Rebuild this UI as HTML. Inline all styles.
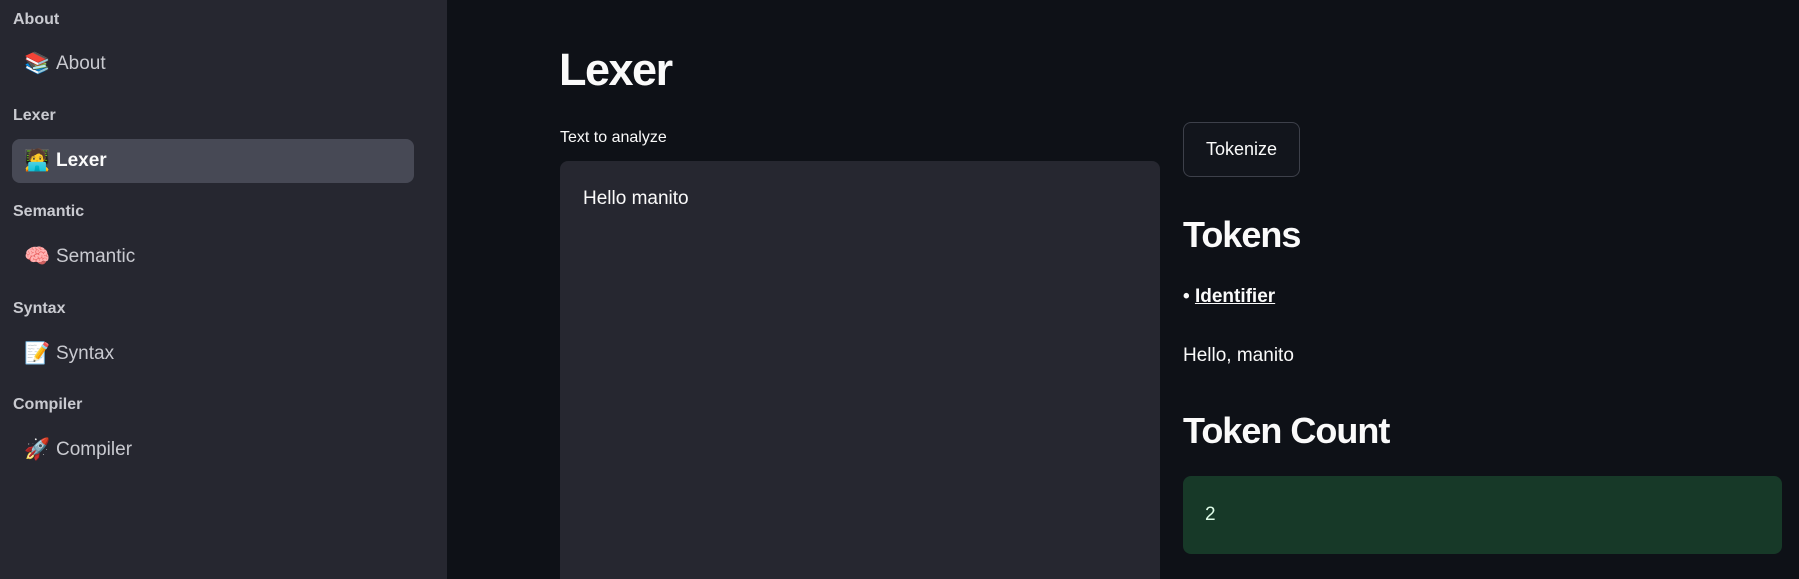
<!DOCTYPE html>
<html style="overflow:hidden;width:1799px;height:579px"><head><meta charset="utf-8"><style>
*{margin:0;padding:0;box-sizing:border-box}
body{width:1799px;height:579px;overflow:hidden;background:#0e1117;font-family:"Liberation Sans","Noto Sans CJK JP",sans-serif;color:#fafafa;position:relative}
.sb{position:absolute;left:0;top:0;width:447px;height:579px;background:#262730}
.h{position:absolute;left:13px;font-size:16px;font-weight:bold;color:#c9cad0;transform:translateY(-50%)}
.it{position:absolute;left:12px;width:402px;height:44px;border-radius:8px;transform:translateY(-50%);display:flex;align-items:center;padding-left:12px;font-size:19px;color:#c9cad0}
.it .e{width:24px;font-size:21px;margin-right:8px;font-family:"Noto Color Emoji","DejaVu Sans",sans-serif}
.it.a{background:#474955;color:#fafafa;font-weight:bold}
.t{position:absolute;transform:translateY(-50%);white-space:nowrap}
</style></head><body>
<div class="sb">
<div class="h" style="top:20px">About</div>
<div class="it" style="top:64px"><span class="e">📚</span>About</div>
<div class="h" style="top:116px">Lexer</div>
<div class="it a" style="top:161px"><span class="e">🧑‍💻</span>Lexer</div>
<div class="h" style="top:212px">Semantic</div>
<div class="it" style="top:257px"><span class="e">🧠</span>Semantic</div>
<div class="h" style="top:309px">Syntax</div>
<div class="it" style="top:354px"><span class="e">📝</span>Syntax</div>
<div class="h" style="top:405px">Compiler</div>
<div class="it" style="top:450px"><span class="e">🚀</span>Compiler</div>
</div>
<div class="t" style="left:559px;top:70px;font-size:45px;font-weight:bold;letter-spacing:-1.5px">Lexer</div>
<div class="t" style="left:560px;top:138px;font-size:16px">Text to analyze</div>
<div style="position:absolute;left:560px;top:161px;width:600px;height:418px;background:#262730;border-radius:8px 8px 0 0"></div>
<div class="t" style="left:583px;top:199px;font-size:19px">Hello manito</div>
<div style="position:absolute;left:1183px;top:122px;width:117px;height:55px;border:1px solid #3d404a;border-radius:8px;background:#12151c;display:flex;align-items:center;justify-content:center;font-size:18px">Tokenize</div>
<div class="t" style="left:1183px;top:235px;font-size:36px;font-weight:bold;letter-spacing:-1px">Tokens</div>
<div class="t" style="left:1183px;top:297px;font-size:19px;font-weight:bold">• <u>Identifier</u></div>
<div class="t" style="left:1183px;top:356px;font-size:19px">Hello, manito</div>
<div class="t" style="left:1183px;top:431px;font-size:36px;font-weight:bold;letter-spacing:-1px">Token Count</div>
<div style="position:absolute;left:1183px;top:476px;width:599px;height:78px;background:#173928;border-radius:8px"></div>
<div class="t" style="left:1205px;top:515px;font-size:19px;color:#dffde9">2</div>
</body></html>
